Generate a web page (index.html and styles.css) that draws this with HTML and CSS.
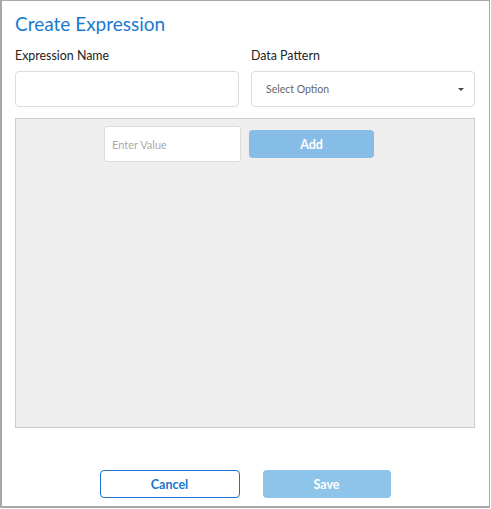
FILE: index.html
```html
<!DOCTYPE html>
<html lang="en">
<head>
    <meta charset="UTF-8">
    <meta name="viewport" content="width=device-width, initial-scale=1.0">
    <title>Create Expression</title>
    <link rel="stylesheet" href="styles.css">
</head>
<body>
<div class="dialog">
    <h1 class="title">Create Expression</h1>

    <div class="fields">
        <div class="field">
            <label class="field-label" for="exprName">Expression Name</label>
            <input class="text-input" type="text" id="exprName">
        </div>
        <div class="field">
            <label class="field-label" for="dataPattern">Data Pattern</label>
            <div class="select">
                <span class="select-text">Select Option</span>
                <span class="caret"></span>
            </div>
        </div>
    </div>

    <div class="values-box">
        <div class="value-row">
            <input class="value-input" type="text" placeholder="Enter Value">
            <button class="btn btn-add">Add</button>
        </div>
    </div>

    <div class="actions">
        <button class="btn btn-cancel">Cancel</button>
        <button class="btn btn-save">Save</button>
    </div>
</div>
</body>
</html>
```

FILE: styles.css
```css
* {
    box-sizing: border-box;
}
body {
    margin: 0;
    font-family: Lato, "Noto Sans", sans-serif;
    background-color: #FFFFFF;
    color: #222222;
}
.dialog {
    width: 490px;
    height: 508px;
    border: 1px solid #a8a8a8;
    border-left-width: 2px;
    border-bottom-width: 2px;
    padding: 0 14px 0 13px;
    display: flex;
    flex-direction: column;
}
.title {
    margin: 10px 0 0 0;
    font-size: 19px;
    font-weight: 400;
    line-height: 26px;
    color: #1a7ad0;
}
.fields {
    display: flex;
    gap: 12px;
    margin-top: 11px;
}
.field {
    flex: 1;
    display: flex;
    flex-direction: column;
}
.field-label {
    font-size: 12.4px;
    line-height: 16px;
    color: #222222;
    margin-bottom: 7px;
}
.text-input,
.select {
    height: 36px;
    border: 1px solid #dcdcdc;
    border-radius: 4px;
    background: #FFFFFF;
    font-family: inherit;
}
.select {
    display: flex;
    align-items: center;
    justify-content: space-between;
    padding: 0 10px 0 14px;
}
.select-text {
    font-size: 10.5px;
    color: #666666;
}
.caret {
    width: 0;
    height: 0;
    border-left: 3px solid transparent;
    border-right: 3px solid transparent;
    border-top: 3px solid #444444;
}
.values-box {
    margin-top: 11px;
    height: 310px;
    background-color: #eeeeee;
    border: 1px solid #cccccc;
    padding-top: 7px;
    padding-right: 12px;
}
.value-row {
    display: flex;
    justify-content: center;
    align-items: center;
    gap: 8px;
}
.value-input {
    width: 137px;
    height: 36px;
    border: 1px solid #dcdcdc;
    border-radius: 3px;
    padding: 0 7px;
    font-family: inherit;
    font-size: 11px;
    background: #FFFFFF;
}
.value-input::placeholder {
    color: #aaaaaa;
}
.btn {
    font-family: inherit;
    font-weight: 700;
    font-size: 12.5px;
    height: 28px;
    border-radius: 4px;
    cursor: pointer;
}
.btn-add {
    width: 125px;
    border: none;
    background-color: #86bde6;
    color: #FFFFFF;
}
.actions {
    margin-top: 42px;
    display: flex;
    justify-content: center;
    gap: 23px;
}
.btn-cancel {
    width: 140px;
    border: 1px solid #1a74cc;
    background: #FFFFFF;
    color: #1a74cc;
}
.btn-save {
    width: 128px;
    border: none;
    background-color: #8ec4ea;
    color: #FFFFFF;
}
```
